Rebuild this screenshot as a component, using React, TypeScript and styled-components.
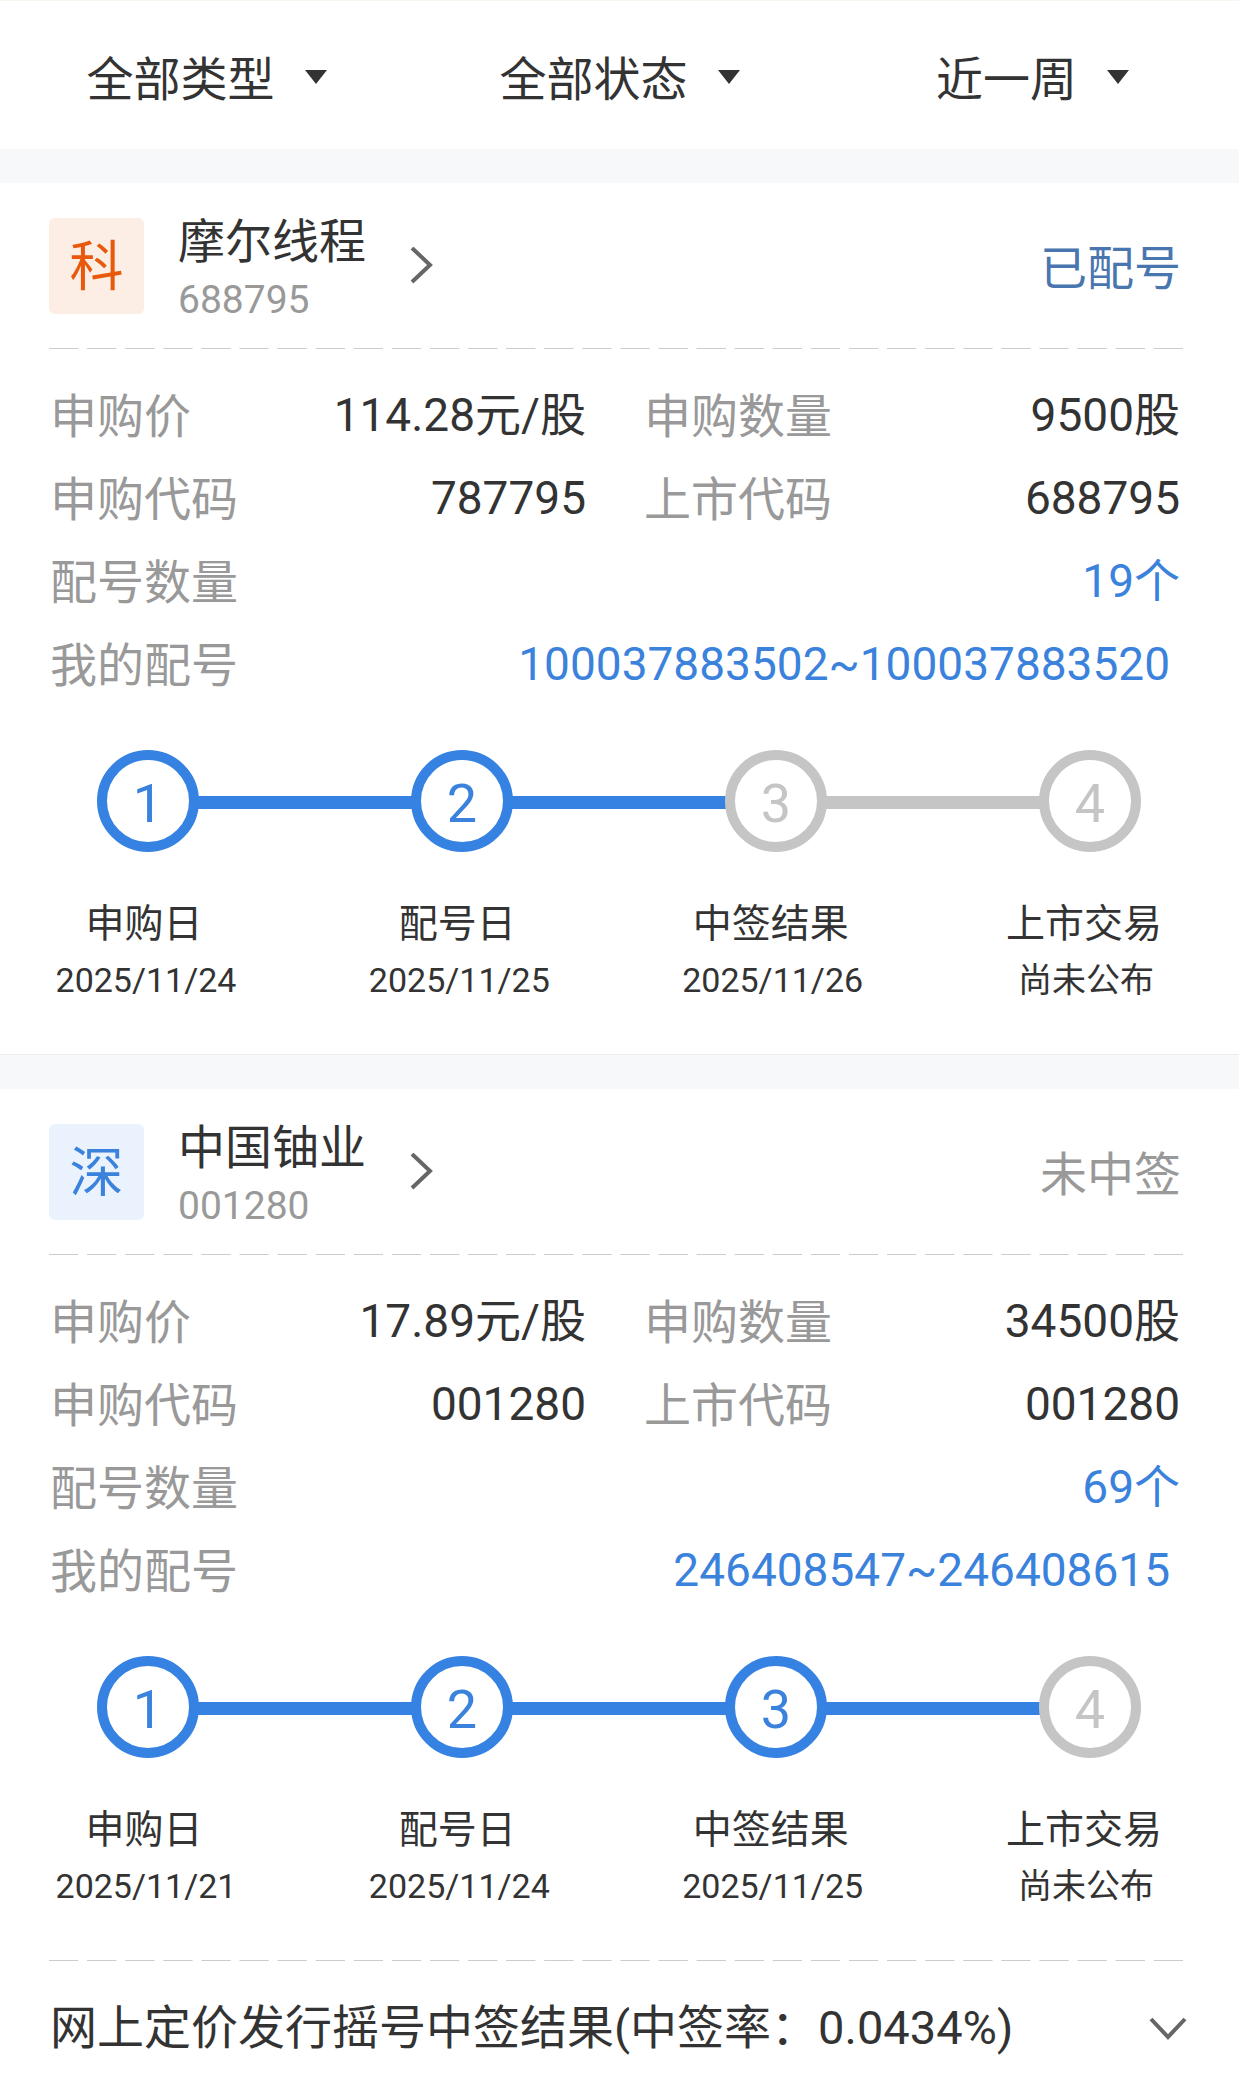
import React, { useState } from "react";
import styled, { createGlobalStyle } from "styled-components";

const color = {
  text: "#333333",
  muted: "#999999",
  blue: "#3a82dc",
  stepOn: "#3582e3",
  stepOff: "#c5c5c5",
  dash: "#cccccc",
  icon: "#666666",
  page: "#f7f8fa",
};

const GlobalStyle = createGlobalStyle`
  *, *::before, *::after { box-sizing: border-box; }
  body {
    margin: 0;
    background: #ffffff;
    color: ${color.text};
    font-family: Roboto, "Noto Sans CJK SC", sans-serif;
    font-size: 47px;
    line-height: 58px;
  }
`;

const Page = styled.main`
  display: flex;
  flex-direction: column;
  gap: 34px;
  background: ${color.page};
`;

const Filters = styled.form`
  display: grid;
  grid-template-columns: repeat(3, 1fr);
  height: 149px;
  padding-top: 3px;
  border-top: 1px solid #fbf5f0;
  background: #ffffff;
`;

const Filter = styled.label`
  display: flex;
  align-items: center;
  justify-content: center;
  gap: 30px;
`;

const FilterSelect = styled.select`
  appearance: none;
  field-sizing: content;
  margin: 0;
  padding: 6px 0 0;
  border: 0;
  outline: 0;
  background: transparent;
  color: inherit;
  font: inherit;
`;

const Card = styled.article`
  padding: 0 56px 0 49px;
  background: #ffffff;

  &:not(:last-child) {
    border-bottom: 1px solid #ebecee;
  }
`;

const CardHead = styled.header`
  display: flex;
  align-items: center;
  justify-content: space-between;
  height: 165px;
  padding-right: 2px;
`;

const StockLink = styled.a`
  display: flex;
  align-items: center;
  color: inherit;
  text-decoration: none;
`;

const Badge = styled.span<{ $fg: string; $bg: string }>`
  width: 95px;
  height: 96px;
  padding-top: 2px;
  border-radius: 6px;
  background: ${(p) => p.$bg};
  color: ${(p) => p.$fg};
  font-size: 54px;
  line-height: 96px;
  text-align: center;
`;

const StockText = styled.span`
  display: flex;
  flex-direction: column;
  margin: 0 44px 0 34px;
  padding-top: 10px;
`;

const StockName = styled.span`
  line-height: 58px;
`;

const StockCode = styled.span`
  color: ${color.muted};
  font-size: 39px;
  line-height: 58px;
`;

const Status = styled.span<{ $active: boolean }>`
  padding-top: 6px;
  color: ${(p) => (p.$active ? "#4a76b0" : color.muted)};
`;

const Dashes = styled.hr`
  height: 1px;
  margin: 0 -9px 0 0;
  border: 0;
  background: linear-gradient(to right, ${color.dash} 76%, transparent 76%) 0 0 /
    38px 1px round;
`;

const Facts = styled.dl`
  display: grid;
  grid-template-columns: 1fr 1fr;
  column-gap: 58px;
  margin: 0;
  padding: 25px 3px 44px 1px;
`;

const Fact = styled.div<{ $wide?: boolean }>`
  display: flex;
  justify-content: space-between;
  grid-column: ${(p) => (p.$wide ? "1 / -1" : "auto")};
  height: 83px;
`;

const FactLabel = styled.dt`
  color: ${color.muted};
  line-height: 86px;
`;

const FactValue = styled.dd<{ $blue?: boolean }>`
  margin: 0;
  color: ${(p) => (p.$blue ? color.blue : color.text)};
  font-size: 46px;
  line-height: 83px;
`;

const NumbersLink = styled.a`
  padding-right: 10px;
  color: inherit;
  text-decoration: none;
`;

const Rail = styled.div`
  display: flex;
  align-items: center;
  padding: 0 42px 0 48px;
`;

const Marker = styled.span<{ $on: boolean }>`
  width: 102px;
  height: 102px;
  border: 10px solid ${(p) => (p.$on ? color.stepOn : color.stepOff)};
  border-radius: 50%;
  color: ${(p) => (p.$on ? color.blue : color.stepOff)};
  font-size: 54px;
  line-height: 88px;
  text-align: center;
`;

const Track = styled.span<{ $on: boolean }>`
  flex: 1;
  height: 13px;
  margin: 2px -2px 0;
  background: ${(p) => (p.$on ? color.stepOn : color.stepOff)};
`;

const StepList = styled.ol`
  display: flex;
  justify-content: space-between;
  margin: 0;
  padding: 43px 0 47px;
  list-style: none;
`;

const StepItem = styled.li`
  width: 194px;
  text-align: center;
`;

const StepTitle = styled.div`
  padding-right: 4px;
  font-size: 39px;
`;

const StepDate = styled.div`
  font-size: 34px;
  line-height: 54px;
`;

const ResultToggle = styled.button`
  display: flex;
  align-items: center;
  justify-content: space-between;
  width: 100%;
  padding: 38px 0 20px 1px;
  border: 0;
  background: transparent;
  color: inherit;
  font: inherit;
  text-align: left;
`;

const ToggleIcon = styled.svg<{ $open: boolean }>`
  flex: none;
  margin-right: -4px;
  transform: ${(p) => (p.$open ? "rotate(180deg)" : "none")};
`;

function Triangle() {
  return (
    <svg width="22" height="14" viewBox="0 0 22 14" aria-hidden="true">
      <path d="M0 0H22L11 14Z" fill={color.text} />
    </svg>
  );
}

function ChevronRight() {
  return (
    <svg width="23" height="38" viewBox="0 0 23 38" fill="none" aria-hidden="true">
      <path d="M2 1L20 18L2 35" stroke={color.icon} strokeWidth="4" />
    </svg>
  );
}

interface Step {
  title: string;
  date: string;
}

interface Offering {
  badge: string;
  badgeFg: string;
  badgeBg: string;
  name: string;
  code: string;
  status: string;
  active: boolean;
  price: string;
  amount: string;
  applyCode: string;
  listCode: string;
  count: string;
  numbers: string;
  reached: number;
  steps: Step[];
  result?: string;
}

const filters = [
  { name: "type", label: "类型", options: ["全部类型", "新股申购", "新债申购"] },
  { name: "status", label: "状态", options: ["全部状态", "等待配号", "等待抽签"] },
  { name: "range", label: "时间", options: ["近一周", "近一月", "近一年"] },
];

const offerings: Offering[] = [
  {
    badge: "科",
    badgeFg: "#e8590c",
    badgeBg: "#fcede5",
    name: "摩尔线程",
    code: "688795",
    status: "已配号",
    active: true,
    price: "114.28元/股",
    amount: "9500股",
    applyCode: "787795",
    listCode: "688795",
    count: "19个",
    numbers: "100037883502~100037883520",
    reached: 2,
    steps: [
      { title: "申购日", date: "2025/11/24" },
      { title: "配号日", date: "2025/11/25" },
      { title: "中签结果", date: "2025/11/26" },
      { title: "上市交易", date: "尚未公布" },
    ],
  },
  {
    badge: "深",
    badgeFg: "#3a82dc",
    badgeBg: "#e9f2fd",
    name: "中国铀业",
    code: "001280",
    status: "未中签",
    active: false,
    price: "17.89元/股",
    amount: "34500股",
    applyCode: "001280",
    listCode: "001280",
    count: "69个",
    numbers: "246408547~246408615",
    reached: 3,
    steps: [
      { title: "申购日", date: "2025/11/21" },
      { title: "配号日", date: "2025/11/24" },
      { title: "中签结果", date: "2025/11/25" },
      { title: "上市交易", date: "尚未公布" },
    ],
    result: "网上定价发行摇号中签结果(中签率：0.0434%)",
  },
];

function Progress({ steps, reached }: { steps: Step[]; reached: number }) {
  return (
    <>
      <Rail>
        {steps.map((step, i) => (
          <React.Fragment key={step.title}>
            {i > 0 && <Track $on={i <= reached} />}
            <Marker $on={i < reached}>{i + 1}</Marker>
          </React.Fragment>
        ))}
      </Rail>
      <StepList>
        {steps.map((step) => (
          <StepItem key={step.title}>
            <StepTitle>{step.title}</StepTitle>
            <StepDate>{step.date}</StepDate>
          </StepItem>
        ))}
      </StepList>
    </>
  );
}

function OfferingCard({ item }: { item: Offering }) {
  const [open, setOpen] = useState(false);
  return (
    <Card>
      <CardHead>
        <StockLink href={`#${item.code}`}>
          <Badge $fg={item.badgeFg} $bg={item.badgeBg}>
            {item.badge}
          </Badge>
          <StockText>
            <StockName>{item.name}</StockName>
            <StockCode>{item.code}</StockCode>
          </StockText>
          <ChevronRight />
        </StockLink>
        <Status $active={item.active}>{item.status}</Status>
      </CardHead>
      <Dashes />
      <Facts>
        <Fact>
          <FactLabel>申购价</FactLabel>
          <FactValue>{item.price}</FactValue>
        </Fact>
        <Fact>
          <FactLabel>申购数量</FactLabel>
          <FactValue>{item.amount}</FactValue>
        </Fact>
        <Fact>
          <FactLabel>申购代码</FactLabel>
          <FactValue>{item.applyCode}</FactValue>
        </Fact>
        <Fact>
          <FactLabel>上市代码</FactLabel>
          <FactValue>{item.listCode}</FactValue>
        </Fact>
        <Fact $wide>
          <FactLabel>配号数量</FactLabel>
          <FactValue $blue>{item.count}</FactValue>
        </Fact>
        <Fact $wide>
          <FactLabel>我的配号</FactLabel>
          <FactValue $blue>
            <NumbersLink href={`#numbers-${item.code}`}>{item.numbers}</NumbersLink>
          </FactValue>
        </Fact>
      </Facts>
      <Progress steps={item.steps} reached={item.reached} />
      {item.result && (
        <>
          <Dashes />
          <ResultToggle type="button" aria-expanded={open} onClick={() => setOpen(!open)}>
            <span>{item.result}</span>
            <ToggleIcon
              $open={open}
              width="38"
              height="23"
              viewBox="0 0 38 23"
              fill="none"
              aria-hidden="true"
            >
              <path d="M2 2L19 20L36 2" stroke={color.icon} strokeWidth="4" />
            </ToggleIcon>
          </ResultToggle>
        </>
      )}
    </Card>
  );
}

export default function App() {
  return (
    <>
      <GlobalStyle />
      <Page>
        <Filters>
          {filters.map((filter) => (
            <Filter key={filter.name}>
              <FilterSelect name={filter.name} aria-label={filter.label}>
                {filter.options.map((option) => (
                  <option key={option}>{option}</option>
                ))}
              </FilterSelect>
              <Triangle />
            </Filter>
          ))}
        </Filters>
        {offerings.map((item) => (
          <OfferingCard key={item.code} item={item} />
        ))}
      </Page>
    </>
  );
}
